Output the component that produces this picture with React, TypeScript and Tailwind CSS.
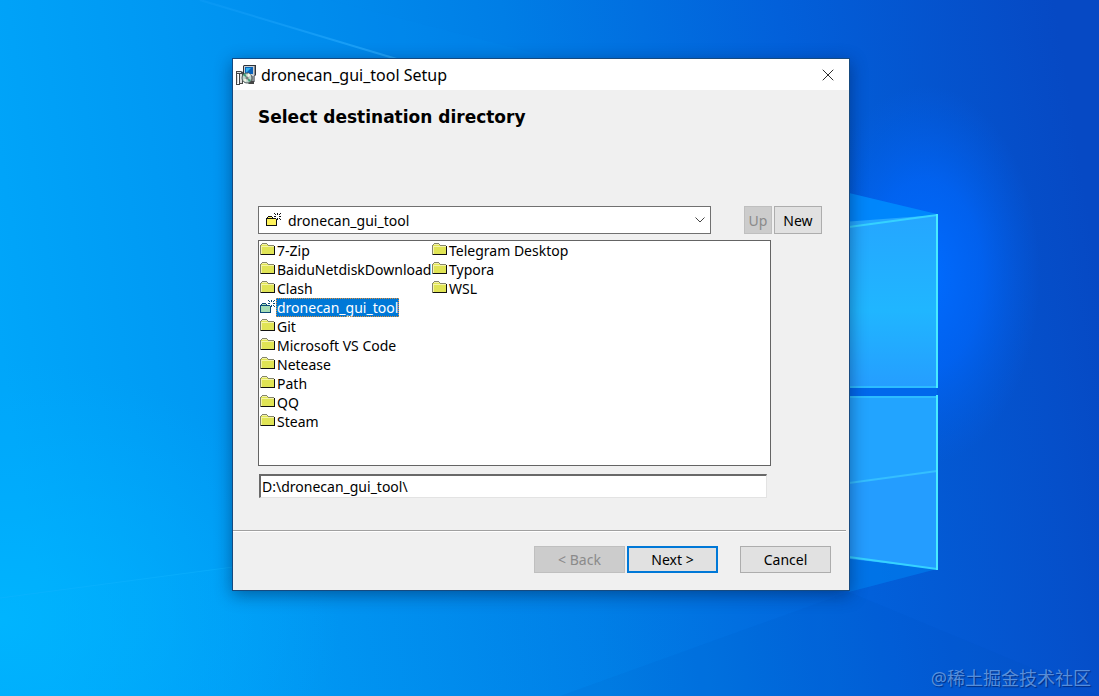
import { useState } from 'react';
import { X } from 'lucide-react';

const FOLDERS = [
  '7-Zip',
  'BaiduNetdiskDownload',
  'Clash',
  'dronecan_gui_tool',
  'Git',
  'Microsoft VS Code',
  'Netease',
  'Path',
  'QQ',
  'Steam',
  'Telegram Desktop',
  'Typora',
  'WSL',
];

const TARGET = 'dronecan_gui_tool';

/** Closed folder used for ordinary rows */
function FolderIcon() {
  return (
    <svg className="size-4 shrink-0" viewBox="0 0 16 16" shapeRendering="crispEdges" aria-hidden="true">
      <path fill="#e0e455" d="M1 2h1V1h5v1h1v1h6v9H1z" />
      <path fill="#f4f4a8" d="M2 2h5v1H2zM1 4h13v1H1zM1 5h1v7H1z" />
      <path fill="#85856c" d="M2 1h5v1H2zM1 2h1v1H1zM7 2h1v1H7zM0 3h1v10H0zM8 3h6v1H8z" />
      <path fill="#111" d="M14 4h1v9h-1zM1 12h14v1H1z" />
    </svg>
  );
}

/** Folder with a sparkle, marks a directory that will be created */
function NewFolderIcon({ selected = false }: { selected?: boolean }) {
  const line = selected ? '#0a4a78' : '#111';
  return (
    <svg className="size-4 shrink-0" viewBox="0 0 16 16" shapeRendering="crispEdges" aria-hidden="true">
      <path fill={selected ? '#a4dcb4' : '#fff35c'} d="M1 7h10v6H1zM2 5h4v2H2z" />
      <path
        fill={line}
        d="M2 4h4v1H2zM1 5h1v1H1zM6 5h1v1H6zM0 6h1v7H0zM1 6h9v1H1zM10 7h1v6h-1zM0 13h11v1H0z"
      />
      <path
        fill={line}
        d="M11 1h1v2h-1zM11 6h1v2h-1zM8 4h2v1H8zM13 4h2v1h-2zM8 1h1v1H8zM9 2h1v1H9zM14 1h1v1h-1zM13 2h1v1h-1zM13 6h1v1h-1zM14 7h1v1h-1z"
      />
    </svg>
  );
}

/** Windows Installer icon: package, monitor and disc */
function InstallerIcon() {
  return (
    <svg className="size-5 shrink-0" viewBox="0 0 20 20" aria-hidden="true">
      <path fill="#30343a" d="M8 0h12v10l-2 2H7V1z" />
      <path fill="#c9ced2" d="M8 1h10v10H8z" />
      <path fill="#0b62b8" d="M9 2h8v7H9z" />
      <path fill="#35b5ee" d="M10 3h5l-5 5z" />
      <path fill="#8a8f94" d="M18 1h1v9l-1 1zM11 11h8v6h-5z" />
      <path fill="#454545" d="M0 6h5l2 1v12H3V9H0z" />
      <path fill="#dedede" d="M1 7h4v1H1zM4 9h2v9H4zM1 10h1v8H1z" />
      <path fill="#454545" d="M0 9h1v10h3v1H0zM14 16h4v3h-6z" />
      <circle cx="11" cy="13" r="5" fill="#bfd4cf" stroke="#4d5b5b" />
      <path fill="#3f9c74" d="M11 13L7 10l2-2zM11 13l4 2-2 2z" />
      <path fill="#f4f4e2" d="M11 13l1-5 3 2zM11 13l-1 4-3-2z" />
      <circle cx="11" cy="13" r="1" fill="#fff" stroke="#555" />
    </svg>
  );
}

function Wallpaper() {
  return (
    <svg
      className="absolute inset-0 h-full w-full"
      viewBox="0 0 1099 696"
      preserveAspectRatio="none"
      aria-hidden="true"
    >
      <defs>
        <linearGradient id="sky" x1="0" y1="0.5" x2="1" y2="0.4">
          <stop offset="0" stopColor="#00a6fa" />
          <stop offset="0.22" stopColor="#0096f2" />
          <stop offset="0.5" stopColor="#007ee6" />
          <stop offset="0.75" stopColor="#0260da" />
          <stop offset="1" stopColor="#0649c4" />
        </linearGradient>
        <radialGradient id="glow">
          <stop offset="0" stopColor="#006cff" />
          <stop offset="0.5" stopColor="#0068ff" stopOpacity="0.65" />
          <stop offset="1" stopColor="#0062f0" stopOpacity="0" />
        </radialGradient>
        <radialGradient id="corner">
          <stop offset="0" stopColor="#00b8ff" stopOpacity="0.8" />
          <stop offset="1" stopColor="#00b0ff" stopOpacity="0" />
        </radialGradient>
        <linearGradient id="paneTop" x1="0" y1="0" x2="0" y2="1">
          <stop offset="0" stopColor="#25a6ff" />
          <stop offset="0.55" stopColor="#20b6ff" />
          <stop offset="1" stopColor="#259dff" />
        </linearGradient>
        <linearGradient id="beam" x1="0" y1="0" x2="1" y2="0">
          <stop offset="0" stopColor="#20a8ff" stopOpacity="0.2" />
          <stop offset="1" stopColor="#30b0ff" stopOpacity="0.7" />
        </linearGradient>
        <linearGradient id="floor" x1="0" y1="0" x2="1" y2="0">
          <stop offset="0" stopColor="#00b4ff" stopOpacity="0.15" />
          <stop offset="1" stopColor="#00a0ff" stopOpacity="0" />
        </linearGradient>
      </defs>
      <rect width="1099" height="696" fill="url(#sky)" />
      <ellipse cx="0" cy="620" rx="340" ry="260" fill="url(#corner)" />
      <ellipse cx="925" cy="275" rx="115" ry="190" fill="url(#glow)" />
      <path d="M200 0L400 60H560L330 0z" fill="#0090f4" opacity="0.15" />
      <path d="M200 0L400 60" stroke="url(#beam)" strokeWidth="2" />
      <path d="M0 598L700 506V696H0z" fill="url(#floor)" />
      <path d="M0 598L233 567" stroke="#10b4ff" strokeWidth="1" opacity="0.5" />
      <path d="M849 193L937 214L849 227z" fill="#0090ff" opacity="0.8" />
      <path d="M849 557L937 569L849 592z" fill="#0080f0" opacity="0.6" />
      <path d="M849 592L560 696H1099V696z" fill="#0048b8" opacity="0.08" />
      <path d="M600 240L937 215V388H600z" fill="url(#paneTop)" />
      <path d="M849 388H937V396H849z" fill="#0068ec" />
      <path d="M600 396H937V569L600 530z" fill="#249dff" />
      <path d="M600 396H937V471L600 515z" fill="#22a8ff" opacity="0.6" />
      <path d="M849 483L937 471" stroke="#35bfff" strokeWidth="2" />
      <path d="M849 227L937 215M849 557L937 569" stroke="#36d2ff" strokeWidth="2" />
      <path d="M849 387H937M849 397H937" stroke="#2cbcff" strokeWidth="2" />
      <path d="M937 214V388M937 395V570" stroke="#48ebff" strokeWidth="2" />
    </svg>
  );
}

function FolderList({ selected, onSelect }: { selected: string; onSelect: (name: string) => void }) {
  return (
    <ul
      aria-label="Folders"
      className="mt-1.5 mr-[53px] grid h-[226px] grid-flow-col auto-cols-[172px] grid-rows-[repeat(10,19px)] content-start border border-[#646464] bg-white pl-px"
    >
      {FOLDERS.map((name) => (
        <li key={name}>
          <button type="button" onClick={() => onSelect(name)} className="flex h-[19px] items-start">
            <span className="pt-px">
              {name === TARGET ? <NewFolderIcon selected={name === selected} /> : <FolderIcon />}
            </span>
            <span
              className={
                name === selected
                  ? 'bg-[#0078d7] text-white outline-1 -outline-offset-1 outline-dotted outline-[#e0903a] px-px leading-[19px]'
                  : 'px-px leading-[19px]'
              }
            >
              {name}
            </span>
          </button>
        </li>
      ))}
    </ul>
  );
}

/**
 * Setup dialog
 * Directory picker step of the installer
 */
function SetupDialog() {
  const [selected, setSelected] = useState(TARGET);
  const [path, setPath] = useState('D:\\dronecan_gui_tool\\');

  return (
    <section
      role="dialog"
      aria-labelledby="dialog-title"
      className="absolute top-[58px] left-[232px] w-[618px] border border-[#164a80] bg-[#f0f0f0] text-[14px] text-black shadow-[0_4px_16px_rgba(0,20,60,0.45)] font-['Noto_Sans',sans-serif]"
    >
      {/* Title bar */}
      <header className="flex h-[31px] items-center bg-white pl-[3px]">
        <InstallerIcon />
        <h1 id="dialog-title" className="ml-[5px] flex-1 text-base">
          dronecan_gui_tool Setup
        </h1>
        <button type="button" aria-label="Close" className="flex h-full w-[42px] items-center justify-center">
          <X className="size-5" strokeWidth={1} />
        </button>
      </header>

      <div className="pt-4 pr-[25px] pl-[25px]">
        <h2 className="h-[100px] font-['DejaVu_Sans',sans-serif] text-[17px] leading-[22px] font-bold">
          Select destination directory
        </h2>

        {/* Current directory */}
        <div className="flex items-center">
          <div className="relative flex-1">
            <select
              aria-label="Destination directory"
              className="block h-7 w-full appearance-none border border-[#707070] bg-white pl-[29px]"
            >
              <option>dronecan_gui_tool</option>
            </select>
            <span className="pointer-events-none absolute inset-y-0 left-2 flex items-center">
              <NewFolderIcon />
            </span>
            <svg
              className="pointer-events-none absolute top-2.5 right-[5px] h-2 w-3"
              viewBox="0 0 12 8"
              fill="none"
              stroke="#444"
              aria-hidden="true"
            >
              <path d="M1.500 1.500L6 6l4.500-4.500" />
            </svg>
          </div>
          <button
            type="button"
            disabled
            className="ml-[33px] h-7 w-7 border border-[#bfbfbf] bg-[#cccccc] text-[#8a8a8a]"
          >
            Up
          </button>
          <button type="button" className="mr-0.5 ml-0.5 h-7 w-12 border border-[#adadad] bg-[#e1e1e1]">
            New
          </button>
        </div>

        <FolderList selected={selected} onSelect={setSelected} />

        <input
          type="text"
          aria-label="Path"
          value={path}
          onChange={(e) => setPath(e.target.value)}
          className="mt-2 ml-px block h-6 w-[508px] border-t-2 border-r border-b border-l-2 border-t-[#696969] border-r-[#e3e3e3] border-b-[#e3e3e3] border-l-[#696969] bg-white pl-px"
        />
      </div>

      {/* Navigation */}
      <footer className="mt-8 mr-[3px] flex justify-end border-t border-[#a0a0a0] pt-[15px] pr-[15px] pb-[17px] shadow-[inset_0_1px_0_#fff]">
        <button
          type="button"
          disabled
          className="h-[27px] w-[91px] border border-[#bfbfbf] bg-[#cccccc] text-[#8a8a8a]"
        >
          &lt; Back
        </button>
        <button type="button" className="ml-0.5 h-[27px] w-[91px] border-2 border-[#0078d7] bg-[#e1e1e1]">
          Next &gt;
        </button>
        <button type="button" className="ml-[22px] h-[27px] w-[91px] border border-[#adadad] bg-[#e1e1e1]">
          Cancel
        </button>
      </footer>
    </section>
  );
}

export default function App() {
  return (
    <main className="relative h-screen min-h-[640px] overflow-hidden bg-[#0078d7]">
      <Wallpaper />
      <SetupDialog />
      <p className="absolute right-2 bottom-1.5 font-['Noto_Sans','Noto_Sans_CJK_SC',sans-serif] text-lg leading-6 text-[#6fa3e6]/80 [text-shadow:1px_1px_1px_rgba(0,20,80,0.6)]">
        @稀土掘金技术社区
      </p>
    </main>
  );
}
